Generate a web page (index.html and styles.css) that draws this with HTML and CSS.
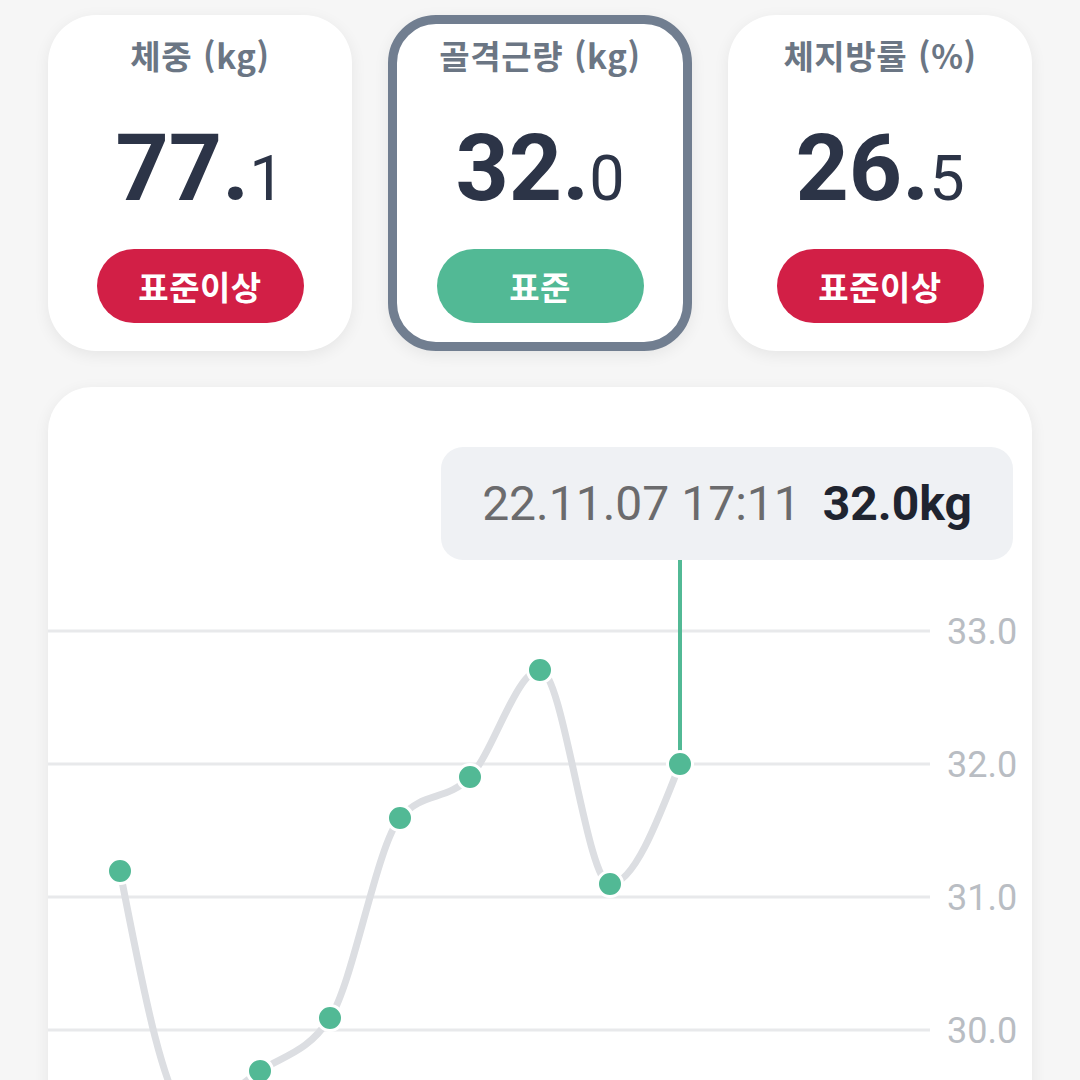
FILE: index.html
```html
<!DOCTYPE html>
<html lang="ko">
<head>
<meta charset="utf-8">
<link rel="stylesheet" href="styles.css">
</head>
<body>
<div class="page">
  <div class="cards">
    <div class="card">
      <div class="card-title">체중 (kg)</div>
      <div class="card-value"><span class="int">77.</span><span class="dec">1</span></div>
      <div class="badge badge-high">표준이상</div>
    </div>
    <div class="card card-active">
      <div class="card-title">골격근량 (kg)</div>
      <div class="card-value"><span class="int">32.</span><span class="dec">0</span></div>
      <div class="badge badge-normal">표준</div>
    </div>
    <div class="card">
      <div class="card-title">체지방률 (%)</div>
      <div class="card-value"><span class="int">26.</span><span class="dec">5</span></div>
      <div class="badge badge-high">표준이상</div>
    </div>
  </div>

  <div class="chart-card">
    <svg class="chart" width="984" height="760" viewBox="48 387 984 760" xmlns="http://www.w3.org/2000/svg">
      <g class="grid">
        <line x1="48" y1="631" x2="930" y2="631"/>
        <line x1="48" y1="764" x2="930" y2="764"/>
        <line x1="48" y1="897" x2="930" y2="897"/>
        <line x1="48" y1="1030" x2="930" y2="1030"/>
      </g>
      <g class="axis">
        <text x="947" y="644">33.0</text>
        <text x="947" y="777">32.0</text>
        <text x="947" y="910">31.0</text>
        <text x="947" y="1043">30.0</text>
      </g>
      <line class="marker" x1="680" y1="560" x2="680" y2="764"/>
      <path class="curve" d="M120,871 C143.33,991.5 166.67,1112 190,1112 C213.33,1112 236.67,1086.7 260,1071 C283.33,1055.3 306.67,1053.3 330,1018 C353.33,982.7 376.67,845.3 400,818 C423.33,790.7 446.67,801.7 470,777 C493.33,752.3 516.67,670 540,670 C563.33,670 586.67,884 610,884 C633.33,884 656.67,824 680,764"/>
      <g class="dots">
        <circle cx="120" cy="871" r="12.5"/>
        <circle cx="190" cy="1112" r="12.5"/>
        <circle cx="260" cy="1071" r="12.5"/>
        <circle cx="330" cy="1018" r="12.5"/>
        <circle cx="400" cy="818" r="12.5"/>
        <circle cx="470" cy="777" r="12.5"/>
        <circle cx="540" cy="670" r="12.5"/>
        <circle cx="610" cy="884" r="12.5"/>
        <circle cx="680" cy="764" r="12.5"/>
      </g>
    </svg>
    <div class="tooltip"><span class="tip-date">22.11.07 17:11</span><span class="tip-value">32.0kg</span></div>
  </div>
</div>
</body>
</html>
```

FILE: styles.css
```css
html, body {
  margin: 0;
  padding: 0;
}
body {
  background: #f6f6f6;
  width: 1080px;
  height: 1080px;
  overflow: hidden;
  font-family: "Noto Sans CJK KR", "Noto Sans", sans-serif;
}
.page {
  padding: 15px 48px 0 48px;
}
.cards {
  display: grid;
  grid-template-columns: 304px 304px 304px;
  column-gap: 36px;
}
.card {
  box-sizing: border-box;
  height: 336px;
  background: #ffffff;
  border-radius: 48px;
  box-shadow: 0 4px 16px rgba(0, 0, 0, 0.07);
  display: flex;
  flex-direction: column;
  align-items: center;
  padding-top: 18px;
}
.card-active {
  border: 9px solid #717e90;
  padding-top: 9px;
}
.card-title {
  font-family: "Noto Sans CJK KR", sans-serif;
  font-weight: 700;
  font-size: 33px;
  line-height: 44px;
  color: #6b7684;
  letter-spacing: 0.6px;
  word-spacing: 1px;
}
.card-value {
  margin-top: 43px;
  height: 98px;
  line-height: 98px;
  font-family: Roboto, "Liberation Sans", sans-serif;
  color: #2c3447;
  white-space: nowrap;
}
.card-value .int {
  font-size: 93px;
  font-weight: 700;
}
.card-value .dec {
  font-size: 63px;
  font-weight: 400;
}
.badge {
  margin-top: 31px;
  width: 207px;
  height: 74px;
  border-radius: 37px;
  display: flex;
  align-items: center;
  justify-content: center;
  color: #ffffff;
  font-family: "Noto Sans CJK KR", sans-serif;
  font-weight: 700;
  font-size: 33px;
  letter-spacing: 0.5px;
}
.badge-high {
  background: #d21f46;
}
.badge-normal {
  background: #52b995;
}
.chart-card {
  position: relative;
  margin-top: 36px;
  width: 984px;
  height: 760px;
  background: #ffffff;
  border-radius: 44px;
  box-shadow: 0 4px 16px rgba(0, 0, 0, 0.07);
  overflow: hidden;
}
.chart {
  display: block;
}
.grid line {
  stroke: #e8e9eb;
  stroke-width: 3;
}
.axis text {
  font-family: Roboto, "Liberation Sans", sans-serif;
  font-size: 36px;
  fill: #b9bdc3;
}
.marker {
  stroke: #52b995;
  stroke-width: 4;
}
.curve {
  fill: none;
  stroke: #dcdee2;
  stroke-width: 7;
}
.dots circle {
  fill: #52b995;
  stroke: #ffffff;
  stroke-width: 3;
}
.tooltip {
  position: absolute;
  left: 393px;
  top: 60px;
  width: 572px;
  height: 113px;
  box-sizing: border-box;
  background: #eff1f4;
  border-radius: 22px;
  display: flex;
  align-items: center;
  justify-content: center;
  font-family: Roboto, "Liberation Sans", sans-serif;
  font-size: 48px;
  white-space: nowrap;
}
.tip-date {
  color: #6b6b6d;
  font-weight: 400;
}
.tip-value {
  color: #1f2430;
  font-weight: 700;
  margin-left: 22px;
}
```
